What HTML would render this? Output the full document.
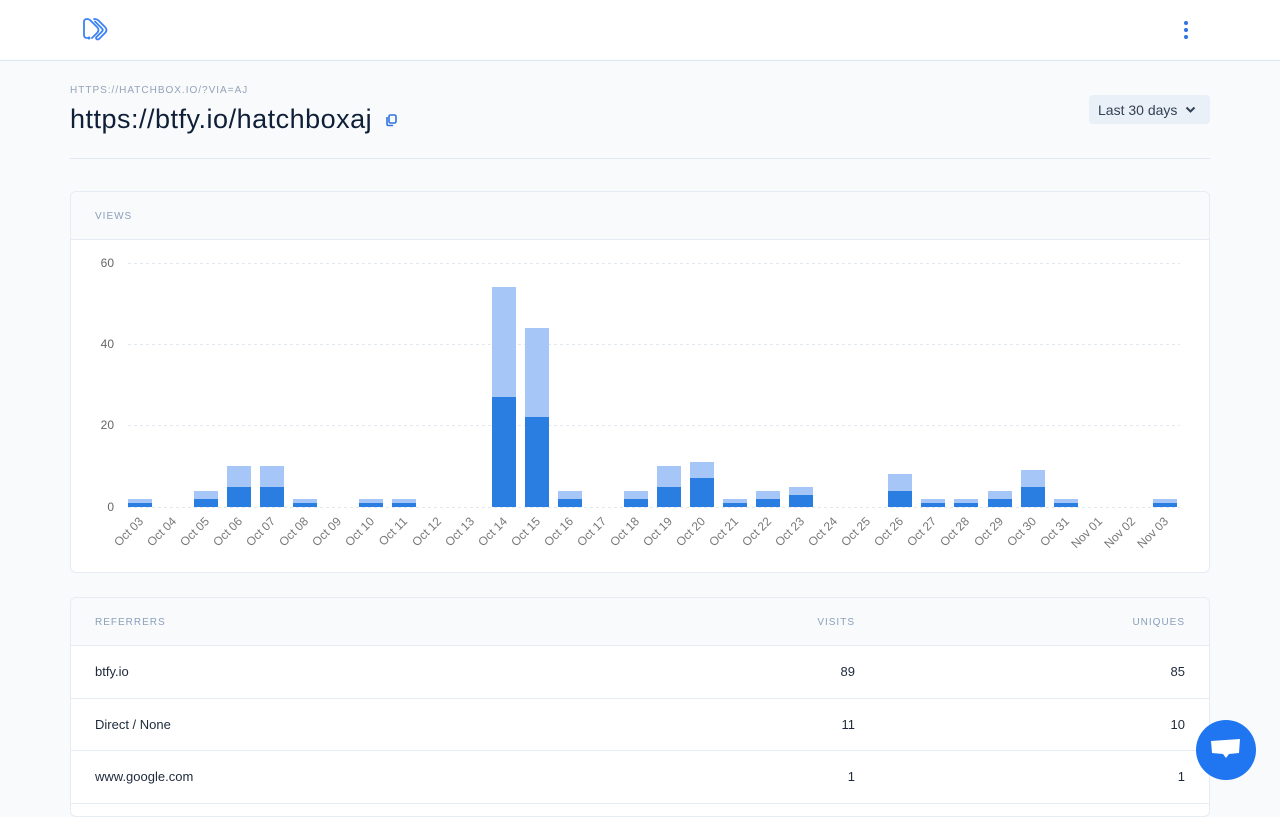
<!DOCTYPE html>
<html><head><meta charset="utf-8">
<style>
*{box-sizing:border-box;margin:0;padding:0}
body{width:1280px;height:800px;overflow:hidden;background:#f8fafc;font-family:"Liberation Sans",sans-serif;color:#1e293b;position:relative}
.nav{position:absolute;left:0;top:0;width:1280px;height:61px;background:#fff;border-bottom:1px solid #dbe6f3}
.small{position:absolute;left:70px;top:85px;font-size:10px;letter-spacing:1px;color:#94a3b8}
h1{position:absolute;left:70px;top:104px;font-size:27px;font-weight:400;color:#0f1f38;letter-spacing:0.5px}
.sel{position:absolute;left:1089px;top:95px;width:121px;height:29px;background:#eaf0f7;border-radius:4px;font-size:14px;color:#334155;padding:7px 0 0 9px}
.hr{position:absolute;left:70px;top:158px;width:1140px;height:1px;background:#e2e8f0}
.card{position:absolute;left:70px;width:1140px;background:#fff;border:1px solid #e6ecf3;border-radius:6px;overflow:hidden}
.ch{height:48px;background:#f8fafc;border-bottom:1px solid #e6ecf3;font-size:10px;letter-spacing:1px;color:#8ba0bb;padding:19px 24px 0;position:relative}
.row{height:52.5px;border-bottom:1px solid #e6ecf3;position:relative;font-size:13px;color:#1e293b}
.row span,.ch span{position:absolute;top:19px}
.row span{top:18px}
.chat{position:absolute;left:1196px;top:720px;width:60px;height:60px;border-radius:50%;background:#1f76f0}
</style></head><body>
<div class="nav">
<svg style="position:absolute;left:82px;top:17px" width="30" height="26" viewBox="0 0 30 26" fill="none" stroke="#3b82f6" stroke-width="1.8" stroke-linejoin="round" stroke-linecap="round">
<path d="M5 21 Q2 21 2 18 V5 Q2 2 5 2 Q7 2 8.5 3.5 L15 10 Q18 13 15 16 L10 21"/>
<path d="M12 2 Q15 2 16.5 3.5 L23 10 Q26 13 23 16 L17 22 Q15.5 23 14.5 22 Q13.5 21 14.5 20 L20 14.5 Q21.5 13 20 11.5 L13 4.5"/>
<circle cx="7" cy="21" r="0.6" fill="#3b82f6"/>
</svg>
<div style="position:absolute;left:1184px;top:21px;width:4px;height:4px;border-radius:2px;background:#2f74e0"></div>
<div style="position:absolute;left:1184px;top:28px;width:4px;height:4px;border-radius:2px;background:#2f74e0"></div>
<div style="position:absolute;left:1184px;top:35px;width:4px;height:4px;border-radius:2px;background:#2f74e0"></div>
</div>
<div class="small">HTTPS://HATCHBOX.IO/?VIA=AJ</div>
<h1>https://btfy.io/hatchboxaj</h1>
<svg style="position:absolute;left:385px;top:113px" width="13" height="14" viewBox="0 0 13 14" fill="none" stroke="#2f74e0" stroke-width="1.6"><rect x="4" y="2" width="7" height="8" rx="1.5"/><path d="M2 4v7q0 1.5 1.5 1.5H8"/></svg>
<div class="sel">Last 30 days <svg style="position:absolute;left:96px;top:11px" width="11" height="8" viewBox="0 0 11 8" fill="none" stroke="#334155" stroke-width="2"><path d="M1.5 1.5l4 4 4-4"/></svg></div>
<div class="hr"></div>

<div class="card" style="top:191px;height:382px">
<div class="ch">VIEWS</div>
</div>
<svg style="position:absolute;left:0;top:0" width="1280" height="600">
<g stroke="#e2e8f0" stroke-dasharray="3,3" stroke-width="1">
<line x1="128" y1="263.5" x2="1180" y2="263.5"/><line x1="128" y1="344.5" x2="1180" y2="344.5"/><line x1="128" y1="425.5" x2="1180" y2="425.5"/><line x1="128" y1="507.5" x2="1180" y2="507.5"/>
</g>
<g font-family="Liberation Sans,sans-serif" font-size="12" fill="#666" text-anchor="end">
<text x="114" y="267">60</text><text x="114" y="348">40</text><text x="114" y="429">20</text><text x="114" y="511">0</text>
</g>
<g fill="#a5c6f6">
<rect x="128" y="499" width="24" height="8"/>
<rect x="194" y="491" width="24" height="16"/>
<rect x="227" y="466" width="24" height="41"/>
<rect x="260" y="466" width="24" height="41"/>
<rect x="293" y="499" width="24" height="8"/>
<rect x="359" y="499" width="24" height="8"/>
<rect x="392" y="499" width="24" height="8"/>
<rect x="492" y="287" width="24" height="220"/>
<rect x="525" y="328" width="24" height="179"/>
<rect x="558" y="491" width="24" height="16"/>
<rect x="624" y="491" width="24" height="16"/>
<rect x="657" y="466" width="24" height="41"/>
<rect x="690" y="462" width="24" height="45"/>
<rect x="723" y="499" width="24" height="8"/>
<rect x="756" y="491" width="24" height="16"/>
<rect x="789" y="487" width="24" height="20"/>
<rect x="888" y="474" width="24" height="33"/>
<rect x="921" y="499" width="24" height="8"/>
<rect x="954" y="499" width="24" height="8"/>
<rect x="988" y="491" width="24" height="16"/>
<rect x="1021" y="470" width="24" height="37"/>
<rect x="1054" y="499" width="24" height="8"/>
<rect x="1153" y="499" width="24" height="8"/>
</g>
<g fill="#2a7de1">
<rect x="128" y="503" width="24" height="4"/>
<rect x="194" y="499" width="24" height="8"/>
<rect x="227" y="487" width="24" height="20"/>
<rect x="260" y="487" width="24" height="20"/>
<rect x="293" y="503" width="24" height="4"/>
<rect x="359" y="503" width="24" height="4"/>
<rect x="392" y="503" width="24" height="4"/>
<rect x="492" y="397" width="24" height="110"/>
<rect x="525" y="417" width="24" height="90"/>
<rect x="558" y="499" width="24" height="8"/>
<rect x="624" y="499" width="24" height="8"/>
<rect x="657" y="487" width="24" height="20"/>
<rect x="690" y="478" width="24" height="29"/>
<rect x="723" y="503" width="24" height="4"/>
<rect x="756" y="499" width="24" height="8"/>
<rect x="789" y="495" width="24" height="12"/>
<rect x="888" y="491" width="24" height="16"/>
<rect x="921" y="503" width="24" height="4"/>
<rect x="954" y="503" width="24" height="4"/>
<rect x="988" y="499" width="24" height="8"/>
<rect x="1021" y="487" width="24" height="20"/>
<rect x="1054" y="503" width="24" height="4"/>
<rect x="1153" y="503" width="24" height="4"/>
</g>
<g font-family="Liberation Sans,sans-serif" font-size="12" fill="#777" text-anchor="end">
<text transform="translate(144,522) rotate(-45)">Oct 03</text>
<text transform="translate(177,522) rotate(-45)">Oct 04</text>
<text transform="translate(210,522) rotate(-45)">Oct 05</text>
<text transform="translate(243,522) rotate(-45)">Oct 06</text>
<text transform="translate(276,522) rotate(-45)">Oct 07</text>
<text transform="translate(309,522) rotate(-45)">Oct 08</text>
<text transform="translate(342,522) rotate(-45)">Oct 09</text>
<text transform="translate(375,522) rotate(-45)">Oct 10</text>
<text transform="translate(408,522) rotate(-45)">Oct 11</text>
<text transform="translate(442,522) rotate(-45)">Oct 12</text>
<text transform="translate(475,522) rotate(-45)">Oct 13</text>
<text transform="translate(508,522) rotate(-45)">Oct 14</text>
<text transform="translate(541,522) rotate(-45)">Oct 15</text>
<text transform="translate(574,522) rotate(-45)">Oct 16</text>
<text transform="translate(607,522) rotate(-45)">Oct 17</text>
<text transform="translate(640,522) rotate(-45)">Oct 18</text>
<text transform="translate(673,522) rotate(-45)">Oct 19</text>
<text transform="translate(706,522) rotate(-45)">Oct 20</text>
<text transform="translate(739,522) rotate(-45)">Oct 21</text>
<text transform="translate(772,522) rotate(-45)">Oct 22</text>
<text transform="translate(805,522) rotate(-45)">Oct 23</text>
<text transform="translate(838,522) rotate(-45)">Oct 24</text>
<text transform="translate(871,522) rotate(-45)">Oct 25</text>
<text transform="translate(904,522) rotate(-45)">Oct 26</text>
<text transform="translate(937,522) rotate(-45)">Oct 27</text>
<text transform="translate(970,522) rotate(-45)">Oct 28</text>
<text transform="translate(1004,522) rotate(-45)">Oct 29</text>
<text transform="translate(1037,522) rotate(-45)">Oct 30</text>
<text transform="translate(1070,522) rotate(-45)">Oct 31</text>
<text transform="translate(1103,522) rotate(-45)">Nov 01</text>
<text transform="translate(1136,522) rotate(-45)">Nov 02</text>
<text transform="translate(1169,522) rotate(-45)">Nov 03</text>
</g>
</svg>

<div class="card" style="top:597px;height:220px">
<div class="ch">REFERRERS<span style="right:354px;top:19px">VISITS</span><span style="right:24px;top:19px">UNIQUES</span></div>
<div class="row"><span style="left:24px">btfy.io</span><span style="right:354px">89</span><span style="right:24px">85</span></div>
<div class="row"><span style="left:24px">Direct / None</span><span style="right:354px">11</span><span style="right:24px">10</span></div>
<div class="row"><span style="left:24px">www.google.com</span><span style="right:354px">1</span><span style="right:24px">1</span></div>
</div>
<div class="chat"><svg style="position:absolute;left:14px;top:18px" width="32" height="26" viewBox="0 0 32 26"><path d="M1 3 L30 1 L29 15 L19 16 L16 20 L13 16 L2 15 Z" fill="#fff"/></svg></div>
</body></html>
